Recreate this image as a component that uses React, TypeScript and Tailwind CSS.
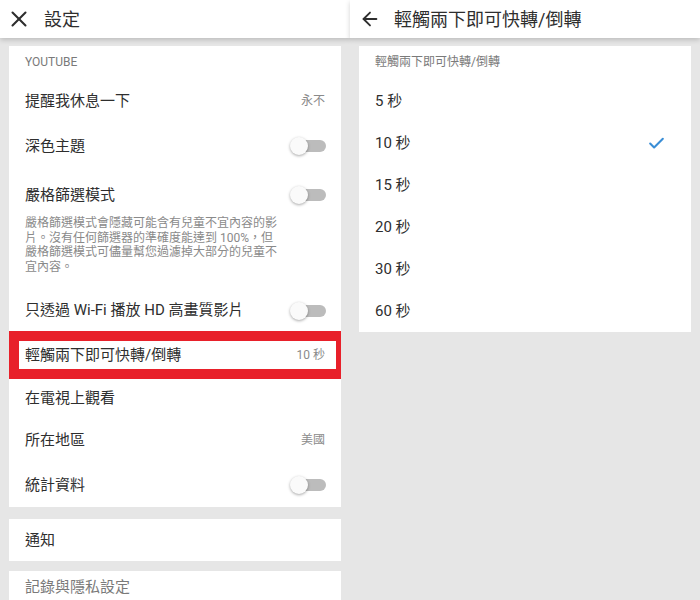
import { X, ArrowLeft, Check } from "lucide-react";

const seconds = ["5 秒", "10 秒", "15 秒", "20 秒", "30 秒", "60 秒"];

function Toggle() {
  return (
    <div className="relative w-[36px] h-[20px] shrink-0">
      <div className="absolute left-[6px] right-0 top-[4px] h-[12px] rounded-full bg-[#bcbcbc]" />
      <div className="absolute left-0 top-[1px] w-[18px] h-[18px] rounded-full bg-[#fafafa] shadow-[0_1px_3px_rgba(0,0,0,0.35)]" />
    </div>
  );
}

function Row({ label, h, value, toggle }: { label: string; h: string; value?: string; toggle?: boolean }) {
  return (
    <div className={`flex items-center justify-between pl-4 pr-[15px] ${h}`}>
      <span className="text-[15px] text-[#2e2e2e]">{label}</span>
      {value && <span className="text-[12px] text-[#8a8a8a] pr-px">{value}</span>}
      {toggle && <Toggle />}
    </div>
  );
}

export default function App() {
  return (
    <div className="w-[700px] h-[600px] overflow-hidden bg-[#e6e6e6] grid grid-cols-2 font-[Roboto,'Noto_Sans_CJK_TC',sans-serif]">
      {/* Left: settings */}
      <div className="flex flex-col">
        <header className="relative z-10 h-[38px] bg-white flex items-center shadow-[0_2px_5px_rgba(0,0,0,0.18)]">
          <X size={26} strokeWidth={1.9} className="ml-[6px] text-[#2e2e2e]" />
          <span className="ml-[12px] text-[18px] text-[#2e2e2e]">設定</span>
        </header>
        <div className="px-[9px] pt-[8px]">
          <div className="bg-white w-[332px]">
            <div className="h-[34px] flex items-end pl-4 pb-[9px] text-[12px] text-[#7a7a7a]">YOUTUBE</div>
            <Row label="提醒我休息一下" h="h-[42px]" value="永不" />
            <Row label="深色主題" h="h-[48px]" toggle />
            <div className="pl-4 pr-[15px] pt-[13px] pb-[16px]">
              <div className="flex items-center justify-between h-[24px]">
                <span className="text-[15px] text-[#2e2e2e]">嚴格篩選模式</span>
                <Toggle />
              </div>
              <p className="mt-[9px] w-[270px] text-[12px] leading-[14.5px] text-[#8a8a8a]">
                嚴格篩選模式會隱藏可能含有兒童不宜內容的影
                <br />
                片。沒有任何篩選器的準確度能達到 100%，但
                <br />
                嚴格篩選模式可儘量幫您過濾掉大部分的兒童不
                <br />
                宜內容。
              </p>
            </div>
            <Row label="只透過 Wi-Fi 播放 HD 高畫質影片" h="h-[41px]" toggle />
            <div className="relative">
              <Row label="輕觸兩下即可快轉/倒轉" h="h-[48px]" value="10 秒" />
              <div className="absolute inset-0 border-y-[10px] border-l-[10px] border-r-[5px] border-[#e8202a]" />
            </div>
            <Row label="在電視上觀看" h="h-[38px]" />
            <Row label="所在地區" h="h-[46px]" value="美國" />
            <Row label="統計資料" h="h-[44px]" toggle />
          </div>
          <div className="mt-[12px] bg-white w-[332px]">
            <Row label="通知" h="h-[42px]" />
          </div>
          <div className="mt-[10px] bg-white w-[332px] h-[40px] pl-4 pt-[4px]">
            <span className="text-[15px] text-[#7a7a7a]">記錄與隱私設定</span>
          </div>
        </div>
      </div>

      {/* Right: seek options */}
      <div className="flex flex-col">
        <header className="relative z-10 h-[38px] bg-white flex items-center shadow-[0_2px_5px_rgba(0,0,0,0.18)]">
          <ArrowLeft size={22} strokeWidth={2} className="ml-[9px] text-[#2e2e2e]" />
          <span className="ml-[13px] text-[18px] text-[#2e2e2e]">輕觸兩下即可快轉/倒轉</span>
        </header>
        <div className="px-[9px] pt-[8px]">
          <div className="bg-white w-[332px]">
            <div className="h-[34px] flex items-end pl-4 pb-[9px] text-[12px] text-[#7a7a7a]">輕觸兩下即可快轉/倒轉</div>
            {seconds.map((s) => (
              <div key={s} className="h-[42px] flex items-center justify-between pl-4 pr-[25px]">
                <span className="text-[15px] text-[#2e2e2e]">{s}</span>
                {s === "10 秒" && <Check size={19} strokeWidth={2.6} className="text-[#3a8ed6]" />}
              </div>
            ))}
          </div>
        </div>
      </div>
    </div>
  );
}
